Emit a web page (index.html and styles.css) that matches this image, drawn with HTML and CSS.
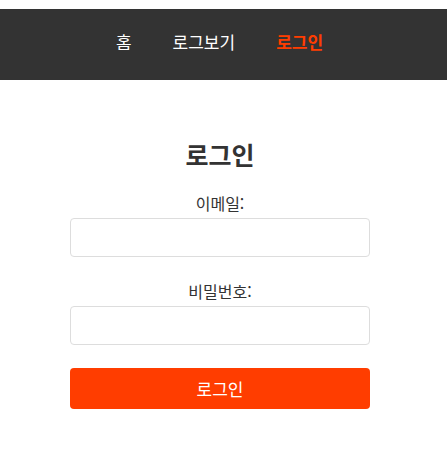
FILE: index.html
```html
<!DOCTYPE html>
<html lang="ko">
<head>
<meta charset="utf-8">
<title>로그인</title>
<link rel="stylesheet" href="styles.css">
</head>
<body>
<nav class="topnav">
  <ul class="menu">
    <li class="menu-item">홈</li>
    <li class="menu-item">로그보기</li>
    <li class="menu-item active">로그인</li>
  </ul>
</nav>
<main class="page">
  <form class="login-form">
    <h2 class="title">로그인</h2>
    <label class="field-label" for="email">이메일:</label>
    <input class="field-input" id="email" type="email">
    <label class="field-label second" for="pw">비밀번호:</label>
    <input class="field-input" id="pw" type="password">
    <button class="submit" type="button">로그인</button>
  </form>
</main>
</body>
</html>
```
FILE: styles.css
```css
html, body {
  margin: 0;
  padding: 0;
  background: #ffffff;
  font-family: "Noto Sans CJK KR", "Noto Sans", sans-serif;
  color: #333333;
}
.topnav {
  margin-top: 9px;
  height: 71px;
  background: #333333;
  display: flex;
  align-items: center;
  justify-content: center;
  padding-right: 8px;
}
.menu {
  list-style: none;
  margin: 0;
  padding: 0;
  display: flex;
  gap: 41px;
  margin-top: -5px;
}
.menu-item {
  font-size: 17px;
  line-height: 20px;
  color: #ffffff;
}
.menu-item.active {
  color: #ff3d00;
  font-weight: 700;
}
.page {
  display: flex;
  justify-content: center;
  padding-right: 7px;
  padding-top: 58px;
}
.login-form {
  width: 300px;
  display: flex;
  flex-direction: column;
  align-items: stretch;
}
.title {
  margin: 0;
  font-size: 25px;
  line-height: 33px;
  font-weight: 700;
  text-align: center;
  color: #333333;
}
.field-label {
  margin-top: 22px;
  font-size: 16px;
  line-height: 20px;
  text-align: center;
  color: #333333;
}
.field-label.second {
  margin-top: 24px;
}
.field-input {
  margin-top: 5px;
  box-sizing: border-box;
  height: 39px;
  border: 1px solid #dddddd;
  border-radius: 4px;
  padding: 0 10px;
  font-size: 16px;
  outline: none;
}
.submit {
  margin-top: 23px;
  height: 41px;
  border: none;
  border-radius: 4px;
  background: #ff3d00;
  color: #ffffff;
  font-family: "Noto Sans CJK KR", "Noto Sans", sans-serif;
  font-size: 17px;
}
```
